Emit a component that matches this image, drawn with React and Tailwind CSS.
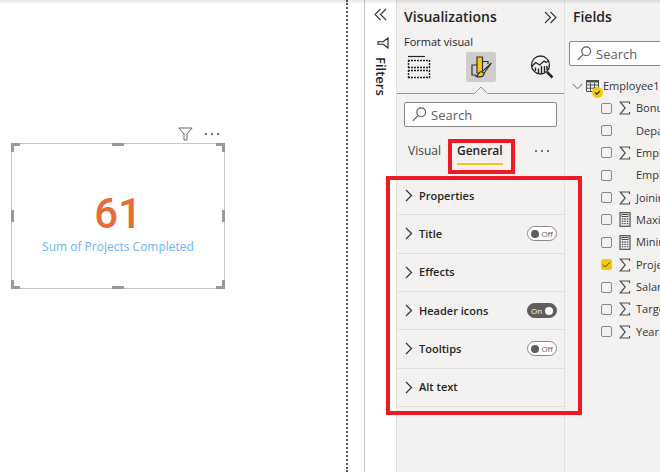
import React from "react";

const formatGroups = [
  { name: "Properties" },
  { name: "Title", toggle: "Off" },
  { name: "Effects" },
  { name: "Header icons", toggle: "On" },
  { name: "Tooltips", toggle: "Off" },
  { name: "Alt text" },
];

const fields = [
  { name: "Bonus", icon: "sum" },
  { name: "Department" },
  { name: "Employee ID", icon: "sum" },
  { name: "Employee Name" },
  { name: "Joining Year", icon: "sum" },
  { name: "Maximum Salary", icon: "calc" },
  { name: "Minimum Salary", icon: "calc" },
  { name: "Projects Completed", icon: "sum", checked: true },
  { name: "Salary", icon: "sum" },
  { name: "Target", icon: "sum" },
  { name: "Year", icon: "sum" },
];

function DoubleChevron({ flip }) {
  return (
    <svg width="13" height="13" viewBox="0 0 13 13" fill="none" stroke="#333" strokeWidth="1.1" className={flip ? "rotate-180" : ""}>
      <path d="M6.5 1 1 6.5l5.5 5.5M12 1 6.5 6.5 12 12" />
    </svg>
  );
}

function Dots() {
  return (
    <svg width="16" height="4" viewBox="0 0 16 4" fill="#444">
      <circle cx="2" cy="2" r="1" />
      <circle cx="8" cy="2" r="1" />
      <circle cx="14" cy="2" r="1" />
    </svg>
  );
}

function SearchBox({ label }) {
  return (
    <div className="flex h-[25px] items-center gap-1 rounded-xs border border-[#8a8886] bg-white pl-[7px]">
      <svg width="15" height="15" viewBox="0 0 15 15" fill="none" stroke="#555" strokeWidth="1.1" className="shrink-0">
        <circle cx="9.2" cy="5.3" r="4.4" />
        <path d="M6 8.6 .8 13.9" />
      </svg>
      <input type="text" aria-label={label} placeholder="Search" className="w-full min-w-0 bg-transparent text-[13px] leading-5 outline-none placeholder:text-[#605e5c]" />
    </div>
  );
}

function Toggle({ state, name }) {
  const on = state === "On";
  return (
    <label className={"relative flex h-[15px] w-[30px] items-center justify-between rounded-full border px-[3px] text-[8px] leading-3 " + (on ? "flex-row-reverse border-[#605e5c] bg-[#605e5c] text-white" : "border-[#8a8886] bg-white text-[#605e5c]")}>
      <input type="checkbox" role="switch" aria-label={name} defaultChecked={on} className="absolute inset-0 appearance-none" />
      <span className={"size-2 rounded-full " + (on ? "bg-white" : "bg-[#605e5c]")} />
      <span>{state}</span>
    </label>
  );
}

function FieldIcon({ icon }) {
  if (icon === "sum")
    return (
      <svg width="12" height="14" viewBox="0 0 12 14" fill="none" stroke="#505050" strokeWidth="1.2">
        <path d="M10.5 3V1H1.2l5 6-5 6h9.3v-2" />
      </svg>
    );
  if (icon === "calc")
    return (
      <svg width="12" height="15" viewBox="0 0 12 15" fill="none" stroke="#505050">
        <rect x="1" y=".7" width="10" height="13.6" strokeWidth="1.2" />
        <rect x="3" y="2.5" width="6" height="2" />
        <path d="M2.8 7h1.5M5.3 7h1.5M7.8 7h1.5M2.8 9.3h1.5M5.3 9.3h1.5M7.8 9.3h1.5M2.8 11.7h1.5M5.3 11.7h1.5M7.8 11.7h1.5" strokeWidth="1.3" />
      </svg>
    );
  return <span className="w-3" />;
}

function FieldRow({ field }) {
  return (
    <li className="flex items-center">
      <label className="flex items-center whitespace-nowrap text-[11px] leading-4 text-[#333]">
        <span className="relative mr-[7px] flex size-[11px] shrink-0">
          <input type="checkbox" defaultChecked={field.checked} className="peer size-[11px] appearance-none rounded-xs border border-[#8a8886] checked:border-[#f2c811] checked:bg-[#f2c811]" />
          <svg width="11" height="11" viewBox="0 0 11 11" fill="none" stroke="#4d4000" className="pointer-events-none absolute inset-0 hidden peer-checked:block">
            <path d="m2 5.7 2.3 2.3L9 3.2" />
          </svg>
        </span>
        <span className="mr-[5px] flex w-3 shrink-0"><FieldIcon icon={field.icon} /></span>
        {field.name}
      </label>
    </li>
  );
}

function CardVisual() {
  return (
    <section className="ml-[11px] mt-[125px] w-[214px]">
      <div className="flex h-[18px] items-center justify-end gap-[11px] pr-[5px]">
        <button type="button" aria-label="Filters on this visual">
          <svg width="15" height="14" viewBox="0 0 15 14" fill="none" stroke="#666">
            <path d="M.9 1h13.2L9 7v6H6V7z" />
          </svg>
        </button>
        <button type="button" aria-label="More options"><Dots /></button>
      </div>
      <div className="relative flex h-[146px] flex-col items-center border border-[#c8c8c8] pt-[45px]">
        <p className="font-['Roboto'] text-[42px] leading-[50px] font-medium text-[#e66c37]">61</p>
        <p className="text-xs leading-4 text-[#6bb5f8]">Sum of Projects Completed</p>
        <span className="absolute -left-px -top-px size-[9px] border-l-3 border-t-3 border-[#999]" />
        <span className="absolute -right-px -top-px size-[9px] border-r-3 border-t-3 border-[#999]" />
        <span className="absolute -bottom-px -left-px size-[9px] border-b-3 border-l-3 border-[#999]" />
        <span className="absolute -bottom-px -right-px size-[9px] border-b-3 border-r-3 border-[#999]" />
        <span className="absolute -top-px left-1/2 h-[3px] w-3 -translate-x-1/2 bg-[#999]" />
        <span className="absolute -bottom-px left-1/2 h-[3px] w-3 -translate-x-1/2 bg-[#999]" />
        <span className="absolute -left-px top-1/2 h-3 w-[3px] -translate-y-1/2 bg-[#999]" />
        <span className="absolute -right-px top-1/2 h-3 w-[3px] -translate-y-1/2 bg-[#999]" />
      </div>
    </section>
  );
}

function FiltersPane() {
  return (
    <aside className="flex w-8 shrink-0 flex-col items-center border-l border-[#c8c8c8] bg-white pt-2">
      <button type="button" aria-label="Expand filters"><DoubleChevron /></button>
      <svg width="12" height="12" viewBox="0 0 12 12" fill="none" stroke="#252423" strokeWidth="1.1" className="mt-4 ml-1">
        <path d="M11 1v10L6.2 7.3H1V4.7h5.2z" />
      </svg>
      <h2 className="mt-2 text-[13px] leading-4 font-semibold text-[#252423] [writing-mode:vertical-rl]">Filters</h2>
    </aside>
  );
}

function PaneTabs() {
  return (
    <div className="flex justify-between px-[7px]">
      <button type="button" aria-label="Build visual" className="flex size-[30px] items-center justify-center">
        <svg width="24" height="24" viewBox="0 0 24 24" fill="none" stroke="#252423">
          <path d="M1 1.5h17" strokeWidth="1.2" />
          <path d="M1 5.5h22M1 12.5h22M1 15.5h22M1 22.5h22M1.5 5v8M22.5 5v8M1.5 15v8M22.5 15v8" strokeWidth="1.4" strokeDasharray="2 1" />
        </svg>
      </button>
      <button type="button" aria-label="Format visual" className="flex size-[30px] items-center justify-center rounded-xs bg-[#cfcdcb]">
        <svg width="24" height="24" viewBox="0 0 24 24" fill="none" stroke="#333" strokeWidth="1.2">
          <path d="M8 10H3v10h4M13.5 6.500H19V9" />
          <path d="M8 2h5.500v16H8z" fill="#f2c811" />
          <path d="M22.500 8 12.800 17l1.700 1.800z" fill="#fff" />
          <path d="M12.500 16.500c-2.700-.3-2.400 3.700-5.500 4.600 2.800 1.500 8.500.7 8-2.500z" fill="#f2c811" />
        </svg>
      </button>
      <button type="button" aria-label="Analytics" className="flex size-[30px] items-center justify-center">
        <svg width="24" height="24" viewBox="0 0 24 24" fill="none" stroke="#252423">
          <circle cx="10.500" cy="10" r="9" strokeWidth="1.3" />
          <path d="m1.800 11.500 4-4 4 2.500L14 6l2 1.500L18.500 6" strokeWidth="1.2" />
          <path d="M5.500 16v-3.500M8.500 18.500v-5M11.500 18.500V11M14.500 17.500V11M17 15v-4" strokeWidth="1.400" />
          <path d="m17 17 5.500 5.500" strokeWidth="2.500" />
        </svg>
      </button>
    </div>
  );
}

function VisualizationsPane() {
  return (
    <section className="relative z-10 w-[169px] shrink-0 border-x border-[#e1dfdd] bg-[#f3f2f1]">
      <header className="flex h-[34px] items-center justify-between px-[7px]">
        <h2 className="text-[14px] leading-5 font-semibold text-[#252423]">Visualizations</h2>
        <button type="button" aria-label="Collapse visualizations"><DoubleChevron flip /></button>
      </header>
      <h3 className="mb-[2px] pl-[7px] text-[11px] leading-4 font-medium text-[#252423]">Format visual</h3>
      <PaneTabs />
      <div className="mt-1 flex">
        <span className="grow border-b border-[#979593]" />
        <svg width="16" height="8" viewBox="0 0 16 8" fill="none" stroke="#979593">
          <path d="M0 7.500h1.500L8 1l6.500 6.500H16" />
        </svg>
        <span className="grow border-b border-[#979593]" />
      </div>
      <div className="px-[7px] pt-2">
        <SearchBox label="Search format options" />
      </div>
      <nav className="mb-[2px] flex h-12 items-center pl-[11px] pr-[14px]">
        <button type="button" className="mr-4 text-xs leading-5 text-[#444]">Visual</button>
        <span className="relative flex">
          <button type="button" className="text-xs leading-5 font-semibold text-[#252423]">General</button>
          <span className="absolute -bottom-1 left-0 h-[2px] w-full bg-[#f2c811]" />
          <span className="pointer-events-none absolute -bottom-[13px] -left-[9px] -right-3 -top-[2px] border-4 border-[#ed1c24]" />
        </span>
        <button type="button" aria-label="More options" className="ml-auto"><Dots /></button>
      </nav>
      <div className="relative">
        <ul className="grid h-[230px] auto-rows-fr">
          {formatGroups.map((g) => (
            <li key={g.name} className="flex items-center justify-between border-b border-[#e1dfdd] pl-2 pr-[7px]">
              <button type="button" className="flex items-center gap-[6px] text-[11px] leading-4 font-semibold text-[#252423]">
                <svg width="8" height="13" viewBox="0 0 8 13" fill="none" stroke="#333" strokeWidth="1.2">
                  <path d="m1 1 5.500 5.500L1 12" />
                </svg>
                {g.name}
              </button>
              {g.toggle && <Toggle state={g.toggle} name={g.name} />}
            </li>
          ))}
        </ul>
        <span className="pointer-events-none absolute -bottom-2 -left-[11px] -right-[18px] -top-px border-4 border-[#ed1c24]" />
      </div>
    </section>
  );
}

function FieldsPane() {
  return (
    <section className="w-[95px] shrink-0 overflow-hidden bg-[#f3f2f1]">
      <h2 className="flex h-[34px] items-center pl-2 text-[14px] leading-5 font-semibold text-[#252423]">Fields</h2>
      <div className="-mr-2 pl-1 pt-[7px]">
        <SearchBox label="Search fields" />
      </div>
      <div className="mt-[10px] mb-px flex h-5 items-center pl-[7px] text-[11px] leading-4 text-[#333]">
        <svg width="11" height="7" viewBox="0 0 11 7" fill="none" stroke="#666" className="mr-[3px] shrink-0">
          <path d="m.5 .8 5 5 5-5" />
        </svg>
        <span className="relative mr-1 shrink-0">
          <svg width="13" height="12" viewBox="0 0 13 12" fill="none" stroke="#505050">
            <path d="M.5 .5h12v11H.5zM.5 5h12M.5 8.200h12M4.500 3v9M8.500 3v9" />
            <path d="M0 1.500h13" strokeWidth="2" />
          </svg>
          <svg width="11" height="11" viewBox="0 0 11 11" className="absolute -bottom-[6px] -right-1">
            <circle cx="5.500" cy="5.500" r="5.500" fill="#f2c811" />
            <path d="m3.200 5.500 1.600 1.600 3-3" fill="none" stroke="#252423" strokeWidth="1.300" />
          </svg>
        </span>
        Employee1
      </div>
      <ul className="grid h-[246px] auto-rows-fr pl-9">
        {fields.map((f) => <FieldRow key={f.name} field={f} />)}
      </ul>
    </section>
  );
}

export default function App() {
  return (
    <div className="relative flex min-h-screen overflow-hidden bg-white font-['Open_Sans','Noto_Sans',sans-serif]">
      <main className="mr-4 min-w-0 flex-1 border-r-2 border-dotted border-[#555]">
        <CardVisual />
      </main>
      <FiltersPane />
      <VisualizationsPane />
      <FieldsPane />
      <div className="pointer-events-none absolute inset-x-0 top-0 z-20 h-1 bg-linear-to-b from-black/10 to-transparent" />
    </div>
  );
}
